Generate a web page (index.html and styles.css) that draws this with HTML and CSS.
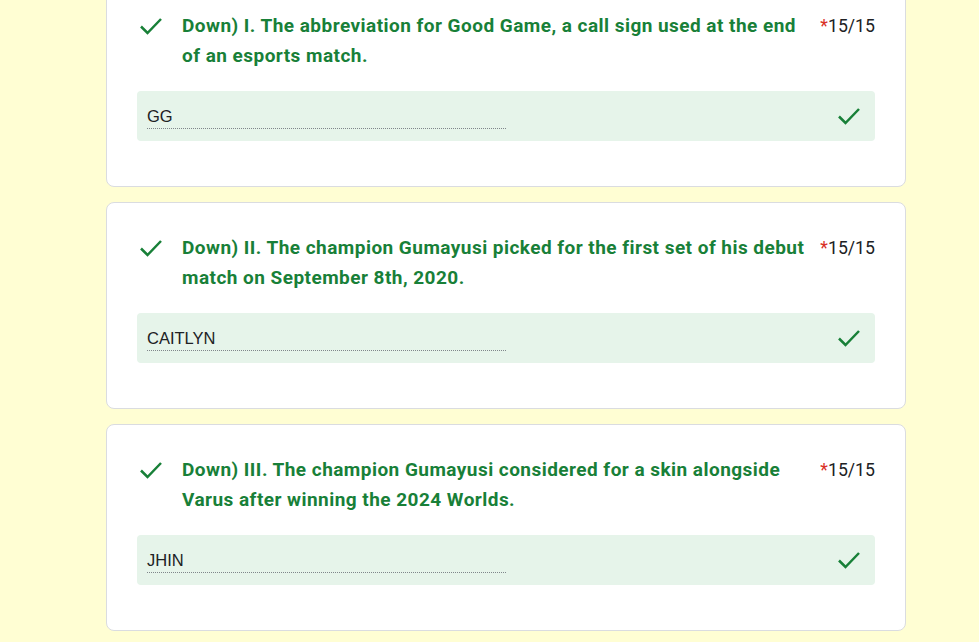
FILE: index.html
```html
<!DOCTYPE html>
<html lang="en">
<head>
<meta charset="utf-8">
<title>Quiz results</title>
<link rel="stylesheet" href="styles.css">
</head>
<body>
<main class="page">
  <section class="card">
    <div class="head">
      <span class="mark"><svg class="check" viewBox="0 0 24 24" width="24" height="24"><path d="M2 12.5 L8.5 19 L22 5" /></svg></span>
      <h2 class="title">Down) I. The abbreviation for Good Game, a call sign used at the end of an esports match.</h2>
      <div class="points"><span class="req">*</span>15/15</div>
    </div>
    <div class="answer">
      <div class="field">GG</div>
      <svg class="check" viewBox="0 0 24 24" width="24" height="24"><path d="M2 12.5 L8.5 19 L22 5" /></svg>
    </div>
  </section>
  <section class="card">
    <div class="head">
      <span class="mark"><svg class="check" viewBox="0 0 24 24" width="24" height="24"><path d="M2 12.5 L8.5 19 L22 5" /></svg></span>
      <h2 class="title">Down) II. The champion Gumayusi picked for the first set of his debut match on September 8th, 2020.</h2>
      <div class="points"><span class="req">*</span>15/15</div>
    </div>
    <div class="answer">
      <div class="field">CAITLYN</div>
      <svg class="check" viewBox="0 0 24 24" width="24" height="24"><path d="M2 12.5 L8.5 19 L22 5" /></svg>
    </div>
  </section>
  <section class="card">
    <div class="head">
      <span class="mark"><svg class="check" viewBox="0 0 24 24" width="24" height="24"><path d="M2 12.5 L8.5 19 L22 5" /></svg></span>
      <h2 class="title">Down) III. The champion Gumayusi considered for a skin alongside Varus after winning the 2024 Worlds.</h2>
      <div class="points"><span class="req">*</span>15/15</div>
    </div>
    <div class="answer">
      <div class="field">JHIN</div>
      <svg class="check" viewBox="0 0 24 24" width="24" height="24"><path d="M2 12.5 L8.5 19 L22 5" /></svg>
    </div>
  </section>
</main>
</body>
</html>
```
FILE: styles.css
```css
html, body {
  margin: 0;
  padding: 0;
  background: #fffed3;
  overflow: hidden;
}
body {
  font-family: Roboto, "Liberation Sans", Arial, sans-serif;
  color: #202124;
}
.page {
  margin-top: -20px;
  padding-left: 106px;
  display: flex;
  flex-direction: column;
  gap: 15px;
}
.card {
  width: 800px;
  box-sizing: border-box;
  background: #ffffff;
  border: 1px solid #dadce0;
  border-radius: 8px;
  padding: 30px 30px 45px 30px;
}
.head {
  display: flex;
  align-items: flex-start;
}
.mark {
  flex: 0 0 45px;
  height: 30px;
  padding-top: 3px;
  box-sizing: border-box;
  padding-left: 2px;
}
.check {
  display: block;
  width: 24px;
  height: 24px;
  fill: none;
  stroke: #188038;
  stroke-width: 2.5;
}
.title {
  flex: 1;
  margin: 0;
  font-family: Roboto, "Liberation Sans", sans-serif;
  font-weight: 700;
  font-size: 19px;
  letter-spacing: 0.46px;
  line-height: 30px;
  color: #188038;
}
.points {
  flex: none;
  margin-left: 10px;
  font-size: 17.7px;
  line-height: 30px;
  color: #202124;
}
.req {
  color: #d93025;
}
.answer {
  margin-top: 20px;
  height: 50px;
  box-sizing: border-box;
  background: #e6f4ea;
  border-radius: 4px;
  display: flex;
  align-items: flex-start;
  justify-content: space-between;
  padding: 15px 14px 0 10px;
}
.field {
  width: 359px;
  font-family: "Liberation Sans", Arial, sans-serif;
  font-size: 16.5px;
  line-height: 20px;
  padding-bottom: 2px;
  border-bottom: 1px dotted #80868b;
  color: #202124;
}
.answer .check {
  margin-top: -2px;
}
```
